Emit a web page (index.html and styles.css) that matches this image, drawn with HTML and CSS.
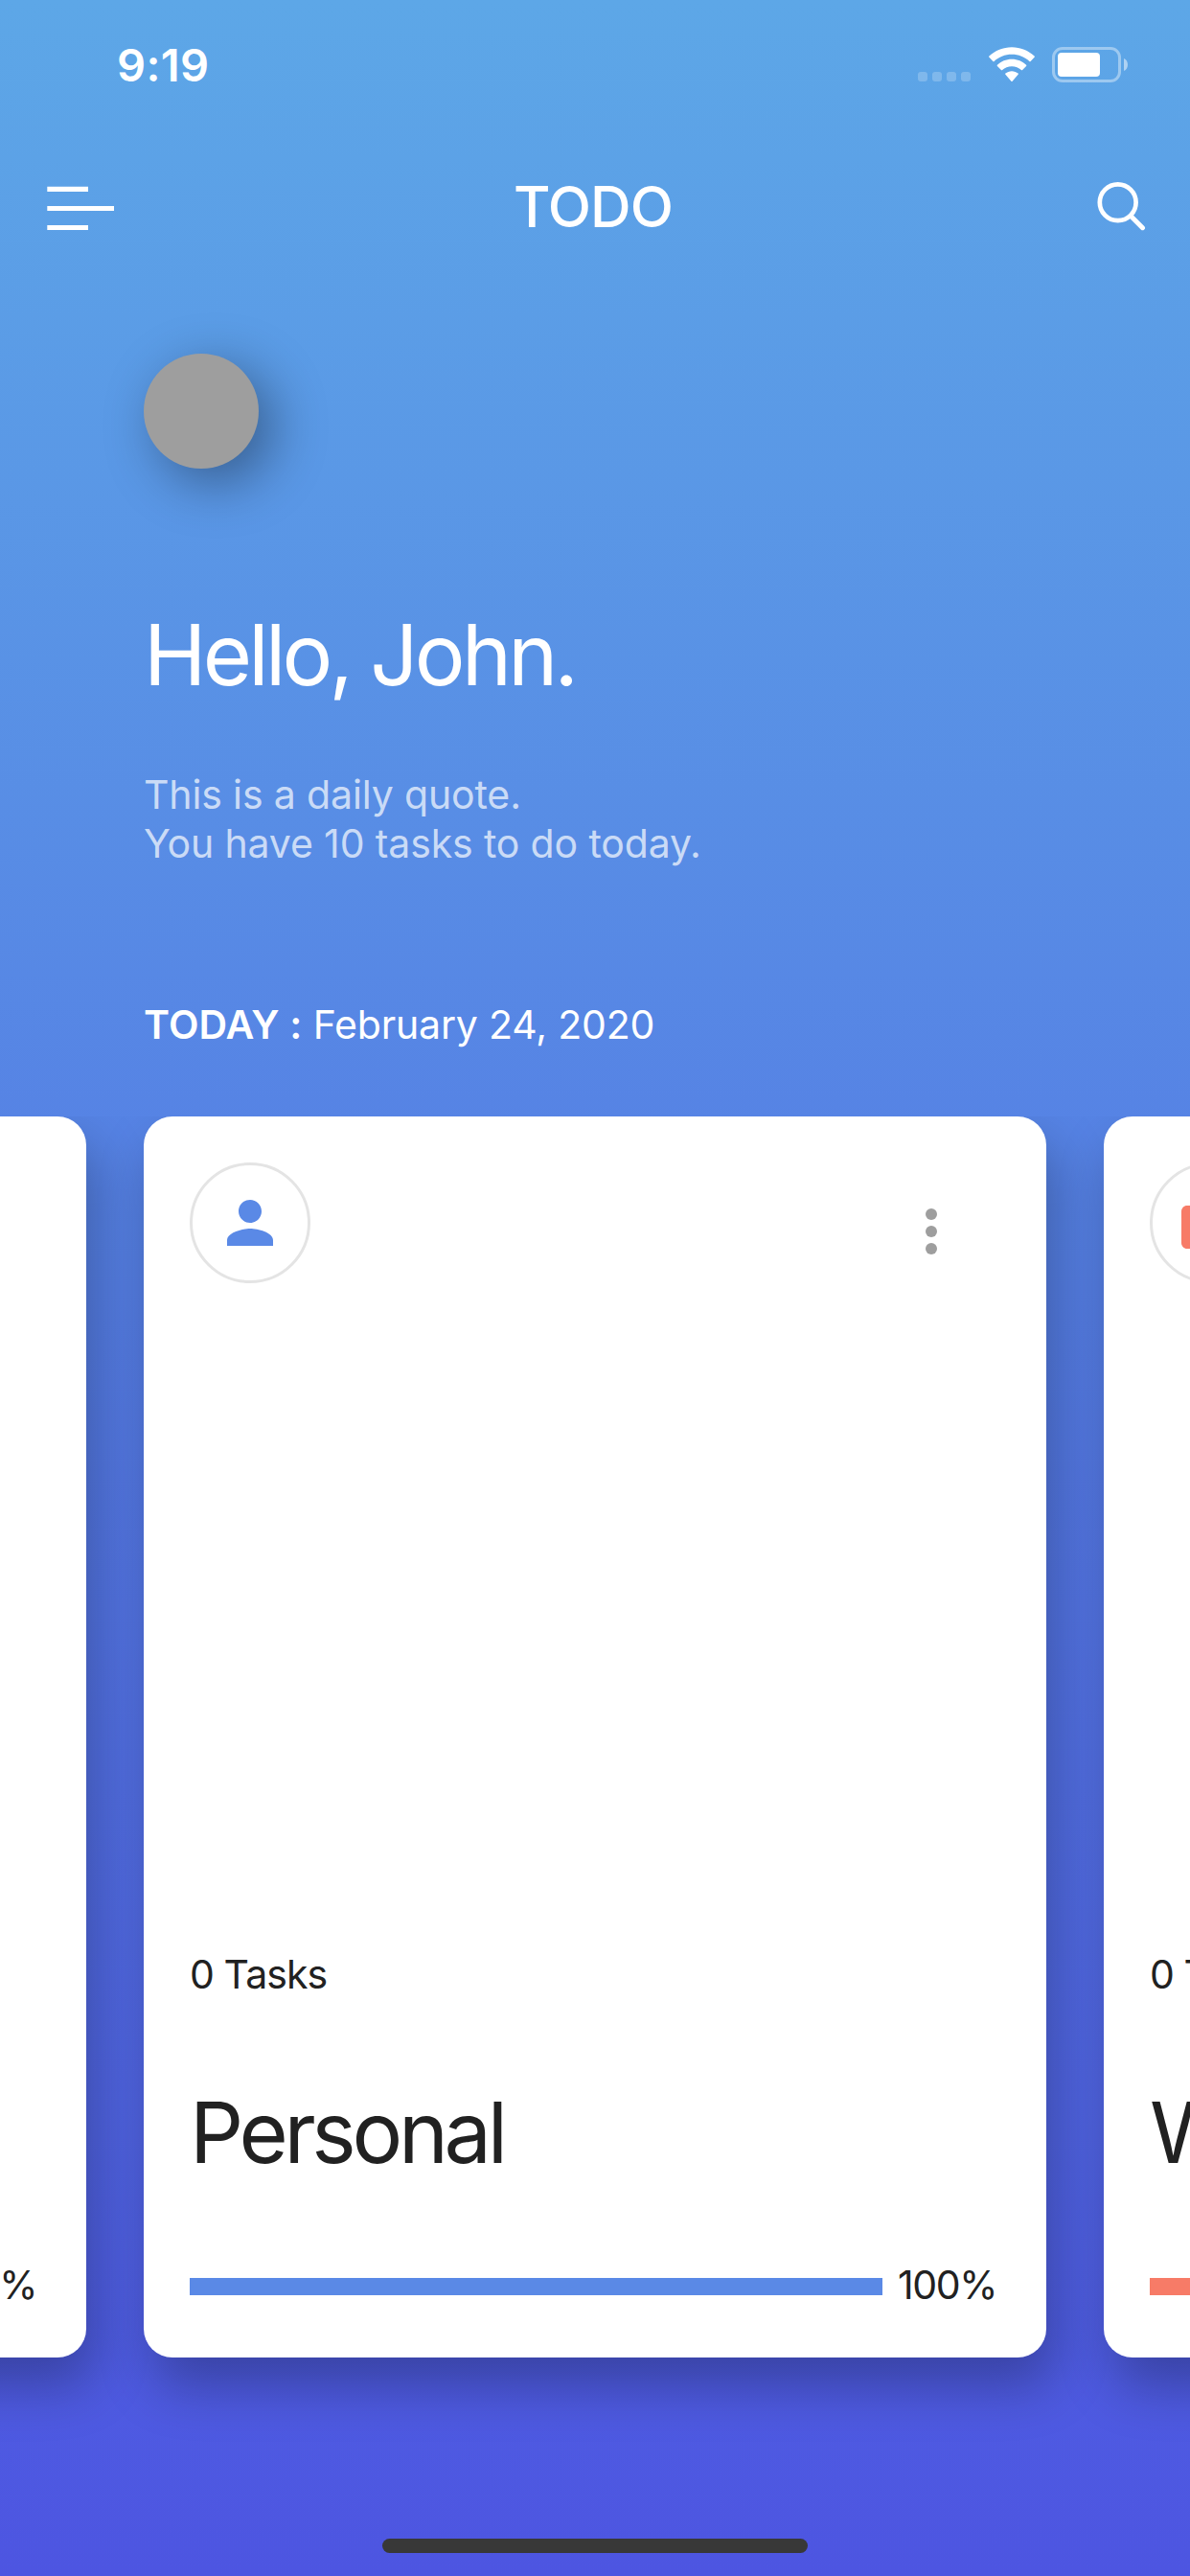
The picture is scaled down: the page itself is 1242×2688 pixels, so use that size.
FILE: index.html
```html
<!DOCTYPE html>
<html lang="en">
<head>
<meta charset="utf-8">
<title>TODO</title>
<link rel="stylesheet" href="styles.css">
</head>
<body>
<div class="screen">
  <div class="status">
    <span class="time">9:19</span>
    <div class="signals">
      <div class="cell"><i></i><i></i><i></i><i></i></div>
      <svg class="wifi" width="48" height="37" viewBox="0 0 48 37" fill="#fff">
        <path d="M24 .3C33.200 .3 41.400 3.800 47.600 9.600Q48.200 10.200 47.600 10.800L43.600 14.900Q43 15.400 42.400 14.900C37.500 10.400 31.200 7.700 24 7.700S10.500 10.400 5.600 14.900Q5 15.400 4.400 14.900L.4 10.800Q-.2 10.200 .4 9.600C6.600 3.800 14.800 .3 24 .3Z"/>
        <path d="M24 12.800C29.900 12.800 35.200 15.100 39.100 18.800Q39.700 19.400 39.100 20L35.100 24.100Q34.500 24.600 33.900 24.100C31.300 21.700 27.800 20.300 24 20.300S16.700 21.700 14.100 24.100Q13.500 24.600 12.900 24.100L8.900 20Q8.300 19.400 8.900 18.800C12.800 15.100 18.100 12.800 24 12.800Z"/>
        <path d="M24 25.200C26.500 25.200 28.800 26.100 30.600 27.600Q31.200 28.200 30.600 28.800L24.600 35.700Q24 36.200 23.400 35.700L17.400 28.800Q16.800 28.200 17.400 27.600C19.200 26.100 21.500 25.200 24 25.200Z"/>
      </svg>
      <svg class="battery" width="80" height="37" viewBox="0 0 80 37">
        <rect x="1.500" y="1.500" width="69" height="34" rx="9.500" fill="none" stroke="#fff" stroke-opacity=".4" stroke-width="3"/>
        <rect x="6" y="6" width="44" height="25" rx="4" fill="#fff"/>
        <path d="M75 12C80.300 14 80.300 23 75 25Z" fill="#fff" fill-opacity=".5"/>
      </svg>
    </div>
  </div>

  <header class="appbar">
    <svg class="menu" width="70" height="46" viewBox="0 0 70 46" fill="#fff">
      <path d="M.3 .7H43V6H.3ZM.3 21H70V26H.3ZM.3 41H43V46H.3Z"/>
    </svg>
    <h1 class="title">TODO</h1>
    <svg class="search" width="52" height="52" viewBox="0 0 52 52" fill="none" stroke="#fff">
      <circle cx="22.700" cy="22.300" r="18.900" stroke-width="4.700"/>
      <path d="M36 36.200L48.500 48.700" stroke-width="5" stroke-linecap="round"/>
    </svg>
  </header>

  <section class="intro">
    <div class="avatar"></div>
    <h2 class="hello">Hello, John.</h2>
    <p class="quote">This is a daily quote.</p>
    <p class="quote quote-tasks">You have 10 tasks to do today.</p>
    <p class="today"><b>TODAY :</b> <span class="date">February 24, 2020</span></p>
  </section>

  <main class="carousel">
    <article class="card">
      <div class="progress"><div class="bar"></div><span class="pct">33%</span></div>
    </article>
    <article class="card">
      <div class="card-top">
        <div class="badge"><svg width="72" height="72" viewBox="0 0 24 24" fill="#5a89e6"><path d="M12 12c2.210 0 4-1.790 4-4s-1.790-4-4-4-4 1.790-4 4 1.790 4 4 4zm0 2c-2.670 0-8 1.340-8 4v2h16v-2c0-2.660-5.330-4-8-4z"/></svg></div>
        <svg class="more" width="72" height="72" viewBox="0 0 24 24" fill="#9e9e9e"><circle cx="12" cy="6" r="2"/><circle cx="12" cy="12" r="2"/><circle cx="12" cy="18" r="2"/></svg>
      </div>
      <p class="count">0 Tasks</p>
      <h3 class="name">Personal</h3>
      <div class="progress"><div class="bar bar-personal"></div><span class="pct">100%</span></div>
    </article>
    <article class="card">
      <div class="card-top">
        <div class="badge"><svg width="72" height="72" viewBox="0 0 24 24" fill="#f77b67"><path d="M20 6h-4V4c0-1.110-.89-2-2-2h-4c-1.110 0-2 .89-2 2v2H4c-1.110 0-1.990 .89-1.990 2L2 19c0 1.110 .89 2 2 2h16c1.110 0 2-.89 2-2V8c0-1.110-.89-2-2-2zm-6 0h-4V4h4v2z"/></svg></div>
      </div>
      <p class="count">0 Tasks</p>
      <h3 class="name">Work</h3>
      <div class="progress"><div class="bar bar-work"></div></div>
    </article>
  </main>

  <div class="home"></div>
</div>
</body>
</html>
```
FILE: styles.css
```css
* { box-sizing: border-box; margin: 0; padding: 0; }

html, body { width: 1242px; height: 2688px; overflow: hidden; }

body {
  font-family: Inter, "Liberation Sans", sans-serif;
  color: #212121;
}

.screen {
  display: flex;
  flex-direction: column;
  width: 1242px;
  height: 2688px;
  overflow: hidden;
  background: linear-gradient(#5da7e7, #4d55e1);
}

/* status bar */
.status {
  display: flex;
  justify-content: space-between;
  height: 132px;
  padding: 38px 64px 0 122px;
}
.time {
  font-size: 47px;
  line-height: 60px;
  font-weight: 600;
  color: #fff;
  letter-spacing: .4px;
}
.signals { display: flex; padding-top: 11px; }
.cell { display: flex; gap: 5px; padding-top: 26px; margin-right: 19px; }
.cell i { width: 10px; height: 10px; border-radius: 3px; background: rgba(255, 255, 255, .22); }
.wifi { margin-right: 18px; }

/* app bar */
.appbar {
  display: grid;
  grid-template-columns: 1fr auto 1fr;
  align-items: start;
  height: 168px;
  padding: 57px 46px 0 49px;
  color: #fff;
}
.menu { margin-top: 5px; }
.title { margin-right: 7px; font-size: 59px; line-height: 54px; font-weight: 500; letter-spacing: -1px; }
.search { justify-self: end; }

/* greeting */
.intro { height: 865px; padding: 69px 150px 0; color: #fff; }
.avatar {
  width: 120px;
  height: 120px;
  border-radius: 50%;
  background: #9e9e9e;
  box-shadow: 15px 15px 55px rgba(0, 0, 0, .38);
}
.hello {
  margin-top: 140px;
  font-size: 88px;
  line-height: 108px;
  font-weight: 400;
  letter-spacing: -3.700px;
}
.quote {
  margin-top: 67px;
  font-size: 41px;
  line-height: 51px;
  color: rgba(255, 255, 255, .7);
  letter-spacing: -.140px;
}
.quote-tasks { margin-top: 0; }
.today { margin-top: 138px; font-size: 41px; line-height: 51px; letter-spacing: -.170px; }
.today b { font-weight: 600; letter-spacing: .1px; }

/* task cards */
.carousel {
  display: flex;
  flex: none;
  gap: 60px;
  height: 1294.500px;
  margin-left: -852px;
  width: 3000px;
  clip-path: inset(0 0 -140px 0);
}
.card {
  display: flex;
  flex-direction: column;
  flex: none;
  width: 942px;
  padding: 48px 48px 44px;
  border-radius: 30px;
  background: #fff;
  box-shadow: 9px 30px 55px rgba(0, 0, 0, .275);
}
.card-top { display: flex; justify-content: space-between; }
.badge {
  display: flex;
  align-items: center;
  justify-content: center;
  width: 126px;
  height: 126px;
  border: 3px solid #e4e4e4;
  border-radius: 50%;
}
.more { margin: 36px 36px 0 0; }
.count { margin-top: auto; font-size: 41px; line-height: 51px; letter-spacing: -.900px; }
.name { margin-top: 85px; font-size: 88px; line-height: 108px; font-weight: 400; letter-spacing: -4.300px; }
.progress { display: flex; align-items: center; margin-top: 77px; height: 60px; }
.card > .progress:first-child { margin-top: auto; }
.bar { flex: none; width: 723px; height: 18px; }
.bar-personal { background: #5a89e6; }
.bar-work { background: #f77b67; }
.pct { margin: -3px 0 0 auto; padding-right: 4px; font-size: 41px; line-height: 51px; letter-spacing: -1.400px; }

/* home indicator */
.home {
  width: 444px;
  height: 15px;
  margin: auto auto 24px;
  border-radius: 8px;
  background: #383838;
}
```
